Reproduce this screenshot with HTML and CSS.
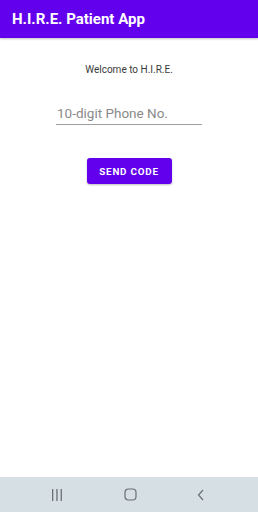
FILE: index.html
```html
<!DOCTYPE html>
<html lang="en">
  <head>
    <meta charset="UTF-8">
    <title>H.I.R.E. Patient App</title>
    <link rel="stylesheet" href="styles.css">
  </head>
  <body>
    <header class="appbar">H.I.R.E. Patient App</header>

    <main class="content">
      <p class="welcome">Welcome to H.I.R.E.</p>
      <div class="field">
        <input class="phone" type="text" placeholder="10-digit Phone No.">
      </div>
      <button class="send">SEND CODE</button>
    </main>

    <nav class="sysnav">
      <svg width="12" height="14" viewBox="0 0 12 14">
        <rect x="1" y="1" width="1.3" height="12" fill="#6b7175"/>
        <rect x="5.3" y="1" width="1.3" height="12" fill="#6b7175"/>
        <rect x="9.6" y="1" width="1.3" height="12" fill="#6b7175"/>
      </svg>
      <svg width="13" height="13" viewBox="0 0 13 13">
        <rect x="1" y="1" width="11" height="11" rx="3.5" fill="none" stroke="#6b7175" stroke-width="1.2"/>
      </svg>
      <svg width="8" height="12" viewBox="0 0 8 12">
        <path d="M6 1 L1.5 6 L6 11" fill="none" stroke="#6b7175" stroke-width="1.2"/>
      </svg>
    </nav>
  </body>
</html>
```

FILE: styles.css
```css
html {
  box-sizing: border-box;
  font-family: Roboto, "Noto Sans", sans-serif;
}

*,
*:before,
*:after {
  box-sizing: inherit;
}

body {
  background: #fff;
  display: flex;
  flex-direction: column;
  height: 100vh;
  margin: 0;
}

.appbar {
  align-items: center;
  background: #6200ee;
  box-shadow: 0 1px 2px rgba(0, 0, 0, 0.25);
  color: #fff;
  display: flex;
  font-size: 15px;
  font-weight: 700;
  height: 38px;
  padding-left: 12px;
}

.content {
  align-items: center;
  display: flex;
  flex: 1;
  flex-direction: column;
}

.welcome {
  color: #3a3a3a;
  font-size: 10px;
  font-weight: 400;
  margin: 26px 0 0;
}

.field {
  margin-top: 28px;
}

.phone {
  background: none;
  border: none;
  border-bottom: 1px solid #9e9e9e;
  color: #333;
  font-family: inherit;
  font-size: 13.5px;
  outline: none;
  padding: 0 0 3px 1px;
  width: 146px;
}

.phone::placeholder {
  color: #8a8a8a;
}

.send {
  background: #6200ee;
  border: none;
  border-radius: 3px;
  box-shadow: 0 1px 2px rgba(0, 0, 0, 0.25);
  color: #fff;
  font-family: inherit;
  font-size: 9.8px;
  font-weight: 700;
  height: 26px;
  letter-spacing: 0.8px;
  margin-top: 33px;
  width: 85px;
}

.sysnav {
  align-items: center;
  background: #d6dfe3;
  display: flex;
  height: 35px;
  justify-content: space-between;
  padding: 0 53px 0 51px;
}
```
